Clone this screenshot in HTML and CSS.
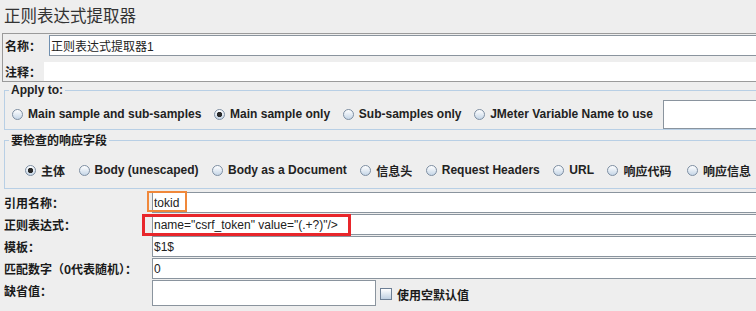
FILE: index.html
```html
<!DOCTYPE html>
<html lang="zh">
<head>
  <meta charset="UTF-8">
  <title>正则表达式提取器</title>
  <link rel="stylesheet" href="styles.css">
</head>
<body>
  <div class="title">正则表达式提取器</div>

  <div class="name-panel">
    <div class="name-row">
      <label class="cn-label name-label">名称：</label>
      <input type="text" class="text-field name-field" value="正则表达式提取器1">
    </div>
    <div class="comment-row">
      <label class="cn-label comment-label">注释：</label>
      <div class="comment-field"></div>
    </div>
  </div>

  <fieldset class="group apply-group">
    <legend>Apply to:</legend>
    <div class="options">
      <label class="opt"><input type="radio" name="scope">Main sample and sub-samples</label>
      <label class="opt"><input type="radio" name="scope" checked>Main sample only</label>
      <label class="opt"><input type="radio" name="scope">Sub-samples only</label>
      <label class="opt"><input type="radio" name="scope">JMeter Variable Name to use</label>
      <input type="text" class="text-field var-field">
    </div>
  </fieldset>

  <fieldset class="group field-group">
    <legend class="cn-label">要检查的响应字段</legend>
    <div class="options">
      <label class="opt cn"><input type="radio" name="field" checked>主体</label>
      <label class="opt"><input type="radio" name="field">Body (unescaped)</label>
      <label class="opt"><input type="radio" name="field">Body as a Document</label>
      <label class="opt cn"><input type="radio" name="field">信息头</label>
      <label class="opt"><input type="radio" name="field">Request Headers</label>
      <label class="opt"><input type="radio" name="field">URL</label>
      <label class="opt cn"><input type="radio" name="field">响应代码</label>
      <label class="opt cn"><input type="radio" name="field">响应信息</label>
    </div>
  </fieldset>

  <div class="fields">
    <label class="cn-label">引用名称：</label>
    <div class="cell">
      <input type="text" class="text-field" value="tokid">
      <span class="mark mark-orange"></span>
    </div>

    <label class="cn-label">正则表达式：</label>
    <div class="cell">
      <input type="text" class="text-field" value='name="csrf_token" value="(.+?)"/>'>
      <span class="mark mark-red"></span>
    </div>

    <label class="cn-label">模板：</label>
    <div class="cell"><input type="text" class="text-field" value="$1$"></div>

    <label class="cn-label">匹配数字（0代表随机）：</label>
    <div class="cell"><input type="text" class="text-field" value="0"></div>

    <label class="cn-label">缺省值：</label>
    <div class="cell default-cell">
      <input type="text" class="text-field default-field">
      <label class="check cn-label"><input type="checkbox">使用空默认值</label>
    </div>
  </div>
</body>
</html>
```

FILE: styles.css
```css
body {
  margin: 0;
  background: #eeeeee;
  font-family: "Liberation Sans", "Noto Sans CJK SC", sans-serif;
  color: #222;
  overflow: hidden;
}
.title {
  height: 33px;
  padding-left: 4px;
  font-family: "Noto Sans CJK SC", sans-serif;
  font-size: 16.5px;
  line-height: 30px;
  color: #333;
}
.cn-label {
  font-family: "Noto Sans CJK SC", sans-serif;
  font-size: 12px;
  font-weight: bold;
  color: #1a1a1a;
}
.text-field {
  box-sizing: border-box;
  display: block;
  width: 100%;
  height: 21px;
  margin: 0;
  padding: 0 1px;
  border: 1px solid #8a949e;
  border-right: none;
  background: #fff;
  font-family: "Liberation Sans", "Noto Sans CJK SC", sans-serif;
  font-size: 12px;
  color: #222;
  outline: none;
}

/* name / comment */
.name-panel {
  margin: 0 -10px 0 2px;
  padding-top: 1px;
  border: 1px solid #9a9a9a;
  border-right: none;
}
.name-row,
.comment-row {
  display: flex;
  align-items: center;
}
.name-label {
  width: 44px;
  padding-left: 2px;
  flex-shrink: 0;
}
.name-field {
  border-left-color: #6f8fb0;
}
.comment-row {
  margin-top: 6px;
}
.comment-label {
  width: 39px;
  padding-left: 2px;
  flex-shrink: 0;
}
.comment-field {
  flex: 1;
  height: 19px;
  background: #fff;
}

/* titled groups */
.group {
  margin: 2px -10px 0 4px;
  padding: 0;
  border: 1px solid #b8cfe5;
  border-right: none;
}
.group legend {
  margin-left: 4px;
  padding: 0 2px;
  font-size: 12px;
  font-weight: bold;
  line-height: 13px;
}
.apply-group .options {
  height: 30px;
  padding: 2px 0 0 7px;
  gap: 12.7px;
}
.field-group {
  margin-top: 3px;
}
.field-group legend {
  line-height: 14px;
}
.field-group .options {
  height: 20px;
  padding: 13px 0 8px 20px;
  gap: 13.5px;
}
.options {
  display: flex;
  align-items: center;
  gap: 12px;
}
.opt {
  display: flex;
  align-items: center;
  gap: 5px;
  font-size: 12px;
  font-weight: bold;
  white-space: nowrap;
  color: #222;
}
.opt.cn {
  font-family: "Noto Sans CJK SC", sans-serif;
}
.opt.cn + .opt.cn {
  margin-left: 2px;
}
.opt input[type="radio"] {
  appearance: none;
  width: 11px;
  height: 11px;
  margin: 0;
  border: 1px solid #7d8ea2;
  border-radius: 50%;
  background: linear-gradient(#ffffff, #c6d6e7);
}
.opt input[type="radio"]:checked {
  background: radial-gradient(circle, #2a2a2a 0 2.3px, transparent 3px), linear-gradient(#ffffff, #c6d6e7);
}
.var-field {
  flex: 1;
  height: 29px;
  margin-left: -3px;
}

/* extractor fields */
.fields {
  display: grid;
  grid-template-columns: 148px 1fr;
  row-gap: 1px;
  margin: 3px -10px 0 4px;
}
.fields .cn-label {
  padding-top: 2px;
  white-space: nowrap;
}
.cell {
  position: relative;
}
.mark {
  position: absolute;
  box-sizing: border-box;
  pointer-events: none;
}
.mark-orange {
  left: -5px;
  top: -1px;
  width: 40px;
  height: 21px;
  border: 2px solid #f0883a;
}
.mark-red {
  left: -10px;
  top: 0;
  width: 209px;
  height: 22px;
  border: 3px solid #e8262b;
}
.default-cell {
  display: flex;
  align-items: center;
}
.default-field {
  width: 224px;
  height: 26px;
  border-right: 1px solid #8a949e;
}
.check {
  display: flex;
  align-items: center;
  gap: 5px;
  margin-left: 4px;
}
.check input {
  appearance: none;
  width: 12px;
  height: 12px;
  margin: 0;
  border: 1px solid #6d7f95;
  background: linear-gradient(#ffffff, #bfd0e2);
}
```
